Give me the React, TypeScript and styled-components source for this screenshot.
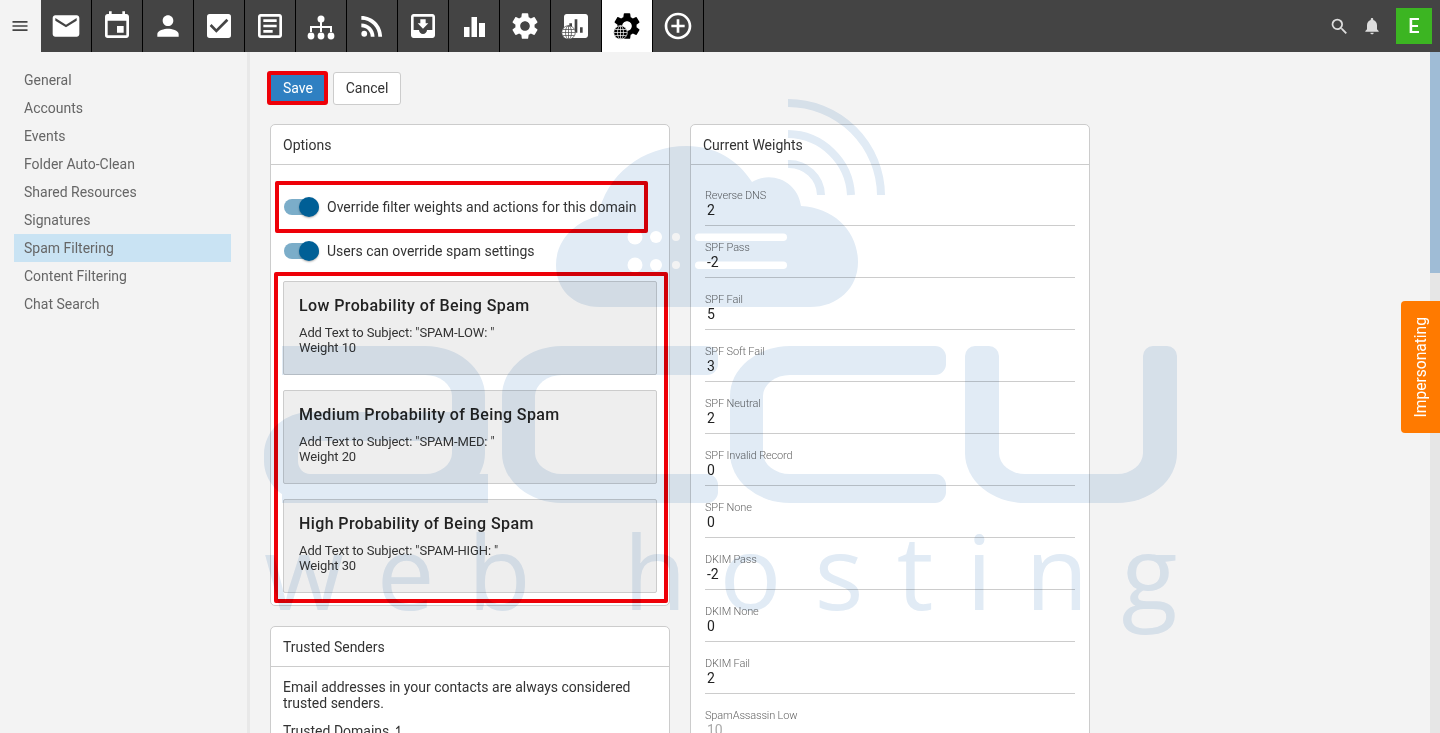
import React from 'react';
import styled, { createGlobalStyle } from 'styled-components';
import {
    MdAddCircleOutline,
    MdAssessment,
    MdCheckBox,
    MdEmail,
    MdEvent,
    MdMenu,
    MdMoveToInbox,
    MdNotifications,
    MdOutlineArticle,
    MdPerson,
    MdRssFeed,
    MdSearch,
    MdSettings,
} from 'react-icons/md';

const INK = '#e1ebf5';
const MARKER = '#ee0008';

const navItems = [
    'General',
    'Accounts',
    'Events',
    'Folder Auto-Clean',
    'Shared Resources',
    'Signatures',
    'Spam Filtering',
    'Content Filtering',
    'Chat Search',
];

const spamLevels = [
    { title: 'Low Probability of Being Spam', subject: 'SPAM-LOW: ', weight: 10 },
    { title: 'Medium Probability of Being Spam', subject: 'SPAM-MED: ', weight: 20 },
    { title: 'High Probability of Being Spam', subject: 'SPAM-HIGH: ', weight: 30 },
];

const weights = [
    { label: 'Reverse DNS', value: '2' },
    { label: 'SPF Pass', value: '-2' },
    { label: 'SPF Fail', value: '5' },
    { label: 'SPF Soft Fail', value: '3' },
    { label: 'SPF Neutral', value: '2' },
    { label: 'SPF Invalid Record', value: '0' },
    { label: 'SPF None', value: '0' },
    { label: 'DKIM Pass', value: '-2' },
    { label: 'DKIM None', value: '0' },
    { label: 'DKIM Fail', value: '2' },
    { label: 'SpamAssassin Low', value: '10', muted: true },
];

const SitemapIcon = () => (
    <svg width="32" height="32" viewBox="0 0 32 32" fill="currentColor">
        <circle cx="16" cy="9" r="3.5" />
        <circle cx="6" cy="26" r="3.4" />
        <circle cx="16" cy="26" r="3.4" />
        <circle cx="26" cy="26" r="3.4" />
        <path d="M15 11h2v5h10v6h-2v-4H17v4h-2v-4H7v4H5v-6h10z" />
    </svg>
);

const BarsIcon = () => (
    <svg width="32" height="32" viewBox="0 0 32 32" fill="currentColor">
        <rect x="6" y="17" width="5.5" height="10" />
        <rect x="13.5" y="7" width="5.5" height="20" />
        <rect x="21" y="13" width="6" height="14" />
    </svg>
);

const Globe = ({ fill, line }: { fill: string; line: string }) => (
    <svg width="15" height="15" viewBox="0 0 15 15" fill="none" stroke={line} strokeWidth="0.7">
        <circle cx="7.5" cy="7.5" r="6.8" fill={fill} />
        <ellipse cx="7.5" cy="7.5" rx="3" ry="6.8" />
        <path d="M7.5 1v13M1 7.5h13M2 4.5h11M2 10.5h11" />
    </svg>
);

const tabs = [
    { icon: <MdEmail /> },
    { icon: <MdEvent /> },
    { icon: <MdPerson /> },
    { icon: <MdCheckBox /> },
    { icon: <MdOutlineArticle /> },
    { icon: <SitemapIcon /> },
    { icon: <MdRssFeed /> },
    { icon: <MdMoveToInbox /> },
    { icon: <BarsIcon /> },
    { icon: <MdSettings /> },
    { icon: <MdAssessment />, globe: true },
    { icon: <MdSettings />, globe: true, active: true },
    { icon: <MdAddCircleOutline /> },
];

export default function App() {
    return (
        <Page>
            <GlobalStyle />
            <TopBar>
                <MenuCell>
                    <MdMenu />
                </MenuCell>
                {tabs.map((tab, i) => (
                    <Tab key={i} $active={tab.active}>
                        {tab.icon}
                        {tab.globe && (
                            <GlobeBadge $active={tab.active}>
                                {tab.active ? (
                                    <Globe fill="#000" line="#fff" />
                                ) : (
                                    <Globe fill="#fff" line="#444" />
                                )}
                            </GlobeBadge>
                        )}
                    </Tab>
                ))}
                <TopActions>
                    <SearchIcon />
                    <BellIcon />
                    <Avatar>E</Avatar>
                </TopActions>
            </TopBar>
            <Body>
                <Sidebar>
                    {navItems.map((item) => (
                        <NavItem key={item} $active={item === 'Spam Filtering'}>
                            {item}
                        </NavItem>
                    ))}
                </Sidebar>
                <Main>
                    <Toolbar>
                        <SaveButton>Save</SaveButton>
                        <CancelButton>Cancel</CancelButton>
                    </Toolbar>
                    <Columns>
                        <Column>
                            <Card>
                                <CardHeader>Options</CardHeader>
                                <OptionsBody>
                                    <OverrideBox>
                                        <Toggle />
                                        <span>Override filter weights and actions for this domain</span>
                                    </OverrideBox>
                                    <ToggleRow>
                                        <Toggle />
                                        <span>Users can override spam settings</span>
                                    </ToggleRow>
                                    <LevelsBox>
                                        {spamLevels.map((level) => (
                                            <Level key={level.title}>
                                                <LevelTitle>{level.title}</LevelTitle>
                                                <LevelText>Add Text to Subject: "{level.subject}"</LevelText>
                                                <LevelText>Weight {level.weight}</LevelText>
                                            </Level>
                                        ))}
                                    </LevelsBox>
                                </OptionsBody>
                            </Card>
                            <Card>
                                <CardHeader>Trusted Senders</CardHeader>
                                <TrustedBody>
                                    <TrustedIntro>
                                        Email addresses in your contacts are always considered trusted senders.
                                    </TrustedIntro>
                                    <TrustedLabel>Trusted Domains ↿</TrustedLabel>
                                </TrustedBody>
                            </Card>
                        </Column>
                        <Column>
                            <Card>
                                <CardHeader>Current Weights</CardHeader>
                                <WeightsBody>
                                    {weights.map((w) => (
                                        <WeightItem key={w.label}>
                                            <WeightLabel>{w.label}</WeightLabel>
                                            <WeightValue $muted={w.muted}>{w.value}</WeightValue>
                                        </WeightItem>
                                    ))}
                                </WeightsBody>
                            </Card>
                        </Column>
                    </Columns>
                </Main>
                <ScrollTrack>
                    <ScrollThumb />
                </ScrollTrack>
            </Body>
            <ImpersonatingTab>
                <span>Impersonating</span>
            </ImpersonatingTab>
            <Watermark>
                <CloudMark viewBox="556 99 330 210">
                    <path
                        fill={INK}
                        d="M600 307C572 307 556 288 556 265C556 240 575 222 598 216C606 175 642 146 687 146C715 146 738 160 752 182C772 170 798 182 801 206C835 208 858 232 858 262C858 288 838 307 810 307Z"
                    />
                    <g fill="#fff">
                        <circle cx="635" cy="237" r="7.5" />
                        <circle cx="656" cy="237" r="6" />
                        <circle cx="676" cy="237" r="4" />
                        <circle cx="635" cy="265" r="7.5" />
                        <circle cx="656" cy="265" r="6" />
                        <circle cx="676" cy="265" r="4" />
                        <rect x="695" y="233.5" width="92" height="7.5" rx="3.75" />
                        <rect x="695" y="261.5" width="92" height="7.5" rx="3.75" />
                    </g>
                    <g fill="none" stroke={INK} strokeWidth="8">
                        <path d="M788 103A93 93 0 0 1 881 195" />
                        <path d="M788 134A64 64 0 0 1 851 195" />
                        <path d="M788 164A32 32 0 0 1 821 195" />
                    </g>
                </CloudMark>
                <Wordmark>
                    <LetterA />
                    <LetterC $gap={17} />
                    <LetterC $gap={12} />
                    <LetterU />
                </Wordmark>
                <Tagline>web hosting</Tagline>
            </Watermark>
        </Page>
    );
}

const GlobalStyle = createGlobalStyle`
    html, body {
        margin: 0;
        height: 100%;
        overflow: hidden;
    }
    body {
        font-family: Roboto, "Liberation Sans", sans-serif;
        font-size: 14px;
        color: #333;
        background: #f3f3f3;
    }
    * {
        box-sizing: border-box;
    }
`;

const Page = styled.div`
    position: relative;
    display: flex;
    flex-direction: column;
    height: 733px;
    overflow: hidden;
`;

const TopBar = styled.div`
    display: flex;
    flex: none;
    height: 52px;
    background: #444;
`;

const MenuCell = styled.div`
    display: flex;
    align-items: center;
    justify-content: center;
    width: 41px;
    padding-right: 2px;
    background: #f3f3f3;
    color: #444;
    font-size: 20px;
`;

const Tab = styled.div<{ $active?: boolean }>`
    position: relative;
    display: flex;
    align-items: center;
    justify-content: center;
    width: 51px;
    border-right: 1px solid #000;
    background: ${(p) => (p.$active ? '#fff' : 'transparent')};
    color: ${(p) => (p.$active ? '#000' : '#fff')};
    font-size: 32px;
`;

const GlobeBadge = styled.div<{ $active?: boolean }>`
    position: absolute;
    left: ${(p) => (p.$active ? '11px' : '10px')};
    top: 25px;
    display: flex;
`;

const TopActions = styled.div`
    display: flex;
    align-items: center;
    margin-left: auto;
    padding-right: 8px;
`;

const SearchIcon = styled(MdSearch)`
    width: 21px;
    height: 21px;
    margin-right: 12px;
    color: #ddd;
`;

const BellIcon = styled(MdNotifications)`
    width: 20px;
    height: 20px;
    margin-right: 14px;
    color: #ddd;
`;

const Avatar = styled.div`
    display: flex;
    align-items: center;
    justify-content: center;
    width: 36px;
    height: 36px;
    background: #3cb522;
    color: #fff;
    font-size: 20px;
    font-weight: 500;
`;

const Body = styled.div`
    display: flex;
    flex: 1;
    min-height: 0;
`;

const Sidebar = styled.nav`
    flex: none;
    width: 250px;
    padding: 14px 16px 0 14px;
    border-right: 3px solid #e8e8e8;
`;

const NavItem = styled.div<{ $active?: boolean }>`
    height: 28px;
    padding-left: 10px;
    line-height: 28px;
    color: #666;
    background: ${(p) => (p.$active ? '#c9e3f3' : 'transparent')};
`;

const Main = styled.main`
    flex: 1;
    min-width: 0;
    overflow: hidden;
`;

const Toolbar = styled.div`
    display: flex;
    align-items: center;
    gap: 5px;
    padding: 19px 0 0 17px;
`;

const SaveButton = styled.button`
    width: 61px;
    height: 34px;
    padding: 0 0 0 1px;
    border: 4px solid ${MARKER};
    border-radius: 3px;
    background: #2f80c2;
    color: #fff;
    font: inherit;
`;

const CancelButton = styled.button`
    width: 68px;
    height: 33px;
    padding: 0;
    border: 1px solid #ccc;
    border-radius: 3px;
    background: #fff;
    color: #333;
    font: inherit;
`;

const Columns = styled.div`
    display: flex;
    align-items: flex-start;
    gap: 20px;
    padding: 19px 0 0 20px;
`;

const Column = styled.div`
    display: flex;
    flex-direction: column;
    gap: 20px;
    width: 400px;
`;

const Card = styled.section`
    border: 1px solid #ccc;
    border-radius: 5px;
    background: #fff;
`;

const CardHeader = styled.header`
    height: 40px;
    padding-left: 12px;
    border-bottom: 1px solid #ccc;
    line-height: 41px;
`;

const OptionsBody = styled.div`
    padding: 16px 0 2px;
`;

const OverrideBox = styled.div`
    display: flex;
    align-items: center;
    gap: 8px;
    height: 52px;
    margin: 0 21px 0 4px;
    padding-left: 5px;
    border: 4px solid ${MARKER};
    border-radius: 2px;
`;

const ToggleRow = styled.div`
    display: flex;
    align-items: center;
    gap: 8px;
    height: 24px;
    margin-top: 6px;
    padding-left: 13px;
`;

const Toggle = styled.div`
    position: relative;
    flex: none;
    width: 35px;
    height: 16px;
    border-radius: 8px;
    background: #7badc9;

    &::after {
        content: '';
        position: absolute;
        right: 0;
        top: -2px;
        width: 20px;
        height: 20px;
        border-radius: 50%;
        background: #005f96;
        box-shadow: 0 1px 2px rgba(0, 0, 0, 0.3);
    }
`;

const LevelsBox = styled.div`
    display: flex;
    flex-direction: column;
    gap: 15px;
    margin: 9px 1px 0 3px;
    padding: 5px 7px 6px 5px;
    border: 4px solid ${MARKER};
    border-radius: 2px;
`;

const Level = styled.div`
    height: 94px;
    padding: 13px 15px 0;
    border: 1px solid #ccc;
    border-radius: 2px;
    background: #eee;
`;

const LevelTitle = styled.div`
    margin-bottom: 9px;
    font-size: 16px;
    font-weight: 500;
    line-height: 21px;
    letter-spacing: 0.4px;
    color: #222;
`;

const LevelText = styled.div`
    font-size: 13px;
    line-height: 15px;
    letter-spacing: -0.1px;
`;

const TrustedBody = styled.div`
    padding: 12px 12px 8px;
`;

const TrustedIntro = styled.p`
    margin: 0 0 12px;
    line-height: 16px;
`;

const TrustedLabel = styled.div`
    line-height: 16px;
`;

const WeightsBody = styled.div`
    padding: 9px 14px 0;
`;

const WeightItem = styled.div`
    height: 52px;
    padding-top: 15px;
    border-bottom: 1px solid #ccc;
`;

const WeightLabel = styled.div`
    font-size: 11px;
    font-weight: 300;
    line-height: 13px;
    letter-spacing: -0.15px;
    color: #666;
`;

const WeightValue = styled.div<{ $muted?: boolean }>`
    padding-left: 2px;
    font-size: 14px;
    line-height: 16px;
    color: ${(p) => (p.$muted ? '#aaa' : '#222')};
`;

const ScrollTrack = styled.div`
    flex: none;
    width: 10px;
    background: #e6e6e6;
`;

const ScrollThumb = styled.div`
    height: 221px;
    background: #9fbcd6;
`;

const ImpersonatingTab = styled.div`
    position: absolute;
    right: 0;
    top: 301px;
    display: flex;
    align-items: center;
    justify-content: center;
    width: 39px;
    height: 132px;
    border-radius: 4px 0 0 4px;
    background: #ff7a00;
    color: #fff;
    font-size: 15.6px;

    span {
        writing-mode: vertical-rl;
        transform: rotate(180deg);
    }
`;

const Watermark = styled.div`
    position: absolute;
    inset: 0;
    pointer-events: none;
    mix-blend-mode: multiply;
`;

const CloudMark = styled.svg`
    position: absolute;
    left: 556px;
    top: 99px;
    width: 330px;
    height: 210px;
`;

const Wordmark = styled.div`
    position: absolute;
    left: 264px;
    top: 346px;
    display: flex;
`;

const LetterBase = styled.div`
    position: relative;
    height: 157px;

    &::before,
    &::after {
        content: '';
        position: absolute;
    }
`;

const LetterA = styled(LetterBase)`
    width: 221px;

    &::before {
        left: 0;
        top: 66px;
        bottom: 0;
        width: 190px;
        border: solid ${INK};
        border-width: 29px 0 29px 34px;
        border-radius: 46px 0 0 46px / 42px 0 0 42px;
    }
    &::after {
        right: 0;
        top: 0;
        bottom: 0;
        width: 170px;
        border: solid ${INK};
        border-width: 29px 33px 29px 0;
        border-radius: 0 60px 60px 0 / 0 50px 50px 0;
    }
`;

const LetterC = styled(LetterBase)<{ $gap: number }>`
    width: 216px;
    margin-left: ${(p) => p.$gap}px;

    &::before {
        left: 0;
        top: 0;
        bottom: 0;
        width: 120px;
        border: solid ${INK};
        border-width: 29px 0 29px 33px;
        border-radius: 60px 0 0 60px / 50px 0 0 50px;
    }
    &::after {
        right: 0;
        top: 0;
        width: 120px;
        height: 29px;
        border-radius: 0 11px 11px 0;
        background: ${INK};
        box-shadow: 0 128px 0 ${INK};
    }
`;

const LetterU = styled(LetterBase)`
    width: 212px;
    margin-left: 19px;

    &::before {
        left: 0;
        right: 0;
        top: 20px;
        bottom: 0;
        border: solid ${INK};
        border-width: 0 34px 29px;
        border-radius: 0 0 60px 60px / 0 0 50px 50px;
    }
    &::after {
        left: 0;
        top: 0;
        width: 34px;
        height: 40px;
        border-radius: 10px 10px 0 0;
        background: ${INK};
        box-shadow: 178px 0 0 ${INK};
    }
`;

const Tagline = styled.div`
    position: absolute;
    left: 264px;
    top: 500px;
    font-family: "Open Sans", sans-serif;
    font-size: 103px;
    line-height: 140px;
    letter-spacing: 33px;
    white-space: nowrap;
    color: ${INK};
`;
